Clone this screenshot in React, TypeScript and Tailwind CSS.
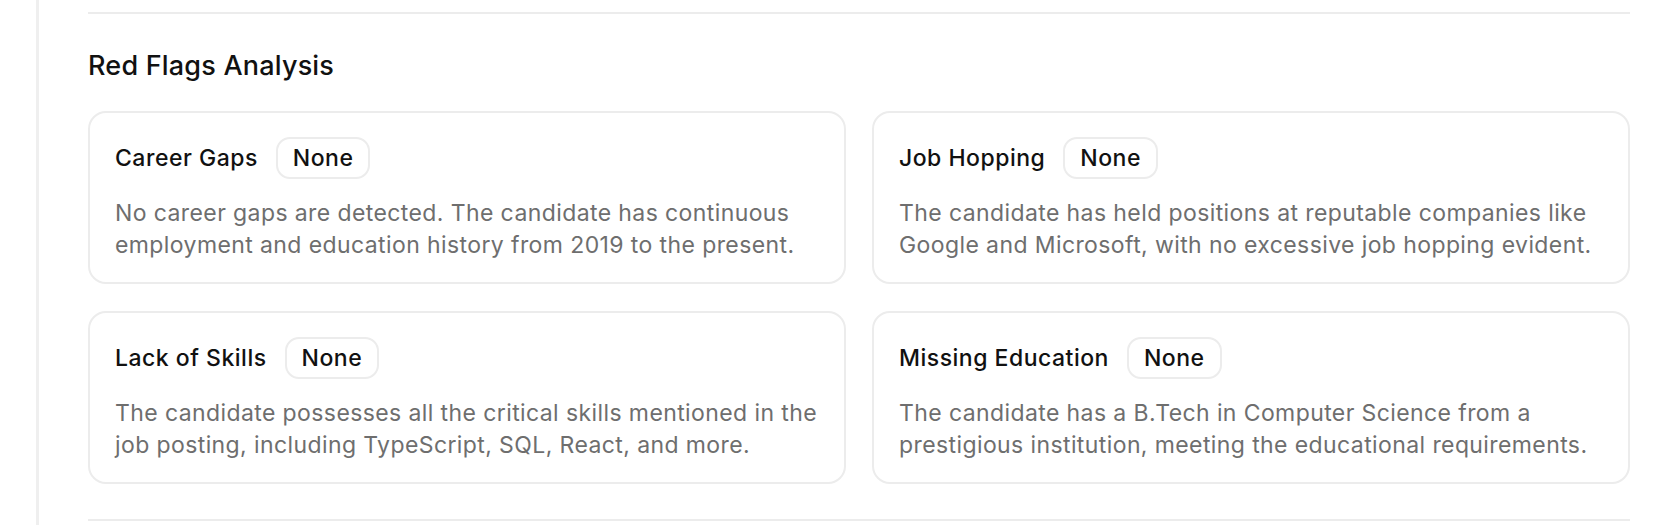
import React from "react";

const flags = [
  {
    label: "Career Gaps",
    level: "None",
    text: "No career gaps are detected. The candidate has continuous employment and education history from 2019 to the present.",
  },
  {
    label: "Job Hopping",
    level: "None",
    text: "The candidate has held positions at reputable companies like Google and Microsoft, with no excessive job hopping evident.",
  },
  {
    label: "Lack of Skills",
    level: "None",
    text: "The candidate possesses all the critical skills mentioned in the job posting, including TypeScript, SQL, React, and more.",
  },
  {
    label: "Missing Education",
    level: "None",
    text: "The candidate has a B.Tech in Computer Science from a prestigious institution, meeting the educational requirements.",
  },
];

export default function App() {
  return (
    <div
      className="flex h-[525px] w-full bg-white text-[#111111]"
      style={{ fontFamily: "Inter, 'Noto Sans', sans-serif" }}
    >
      {/* sidebar edge */}
      <div className="h-full w-[39px] shrink-0 border-r-[3px] border-[#efefef]" />

      <div className="flex flex-1 flex-col pl-[49px] pr-[46px] pt-3">
        <div className="h-[2px] w-full bg-[#ececec]" />

        <h2 className="mt-[36px] text-[27px] font-medium leading-[32px] tracking-[0.2px]">
          Red Flags Analysis
        </h2>

        {/* Cards */}
        <div className="mt-[29px] grid grid-cols-2 gap-x-[26px] gap-y-[27px]">
          {flags.map((f) => (
            <div
              key={f.label}
              className="rounded-[18px] border-2 border-[#ececec] px-[25px] pb-[21px] pt-6"
            >
              <div className="flex items-center gap-[18px]">
                <span className="text-[23px] font-medium leading-[28px] tracking-[0.5px]">
                  {f.label}
                </span>
                <span className="flex h-[42px] items-center rounded-[14px] border-2 border-[#ececec] px-[15px] text-[23px] font-medium tracking-[0.5px]">
                  {f.level}
                </span>
              </div>
              <p className="mt-[18px] text-[23px] leading-[32px] tracking-[0.4px] text-[#6e6e6e]">
                {f.text}
              </p>
            </div>
          ))}
        </div>

        <div className="mt-[35px] h-[2px] w-full bg-[#ececec]" />
      </div>
    </div>
  );
}
